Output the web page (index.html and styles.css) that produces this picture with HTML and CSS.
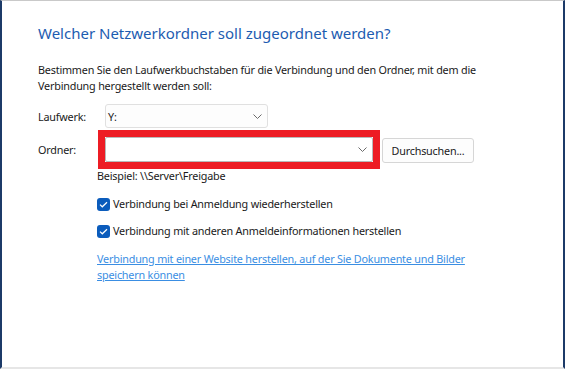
FILE: index.html
```html
<!DOCTYPE html>
<html lang="de">
<head>
<meta charset="utf-8">
<link rel="stylesheet" href="styles.css">
</head>
<body>
<div class="frame">
  <div class="content">
    <h1 class="title">Welcher Netzwerkordner soll zugeordnet werden?</h1>
    <p class="intro">Bestimmen Sie den Laufwerkbuchstaben für die Verbindung und den Ordner, mit dem die Verbindung hergestellt werden soll:</p>
    <div class="form">
      <div class="row row-drive">
        <span class="label">Laufwerk:</span>
        <div class="select select-drive">
          <span class="value">Y:</span>
          <svg class="chev" width="9" height="5" viewBox="0 0 9 5"><path d="M0.5 0.5 L4.5 4.5 L8.5 0.5" fill="none" stroke="#6b6b6b" stroke-width="1"/></svg>
        </div>
      </div>
      <div class="row row-folder">
        <span class="label">Ordner:</span>
        <div class="folder-wrap">
          <div class="select select-folder">
            <span class="value"></span>
            <svg class="chev" width="9" height="5" viewBox="0 0 9 5"><path d="M0.5 0.5 L4.5 4.5 L8.5 0.5" fill="none" stroke="#6b6b6b" stroke-width="1"/></svg>
          </div>
          <div class="highlight"></div>
        </div>
        <button class="btn">Durchsuchen...</button>
      </div>
    </div>
    <div class="options">
      <div class="example">Beispiel: \\Server\Freigabe</div>
      <label class="check"><span class="box"><svg width="9" height="7" viewBox="0 0 9 7"><path d="M1 3.6 L3.3 5.8 L8 1.2" fill="none" stroke="#fff" stroke-width="1.2"/></svg></span>Verbindung bei Anmeldung wiederherstellen</label>
      <label class="check"><span class="box"><svg width="9" height="7" viewBox="0 0 9 7"><path d="M1 3.6 L3.3 5.8 L8 1.2" fill="none" stroke="#fff" stroke-width="1.2"/></svg></span>Verbindung mit anderen Anmeldeinformationen herstellen</label>
      <a class="link" href="#">Verbindung mit einer Website herstellen, auf der Sie Dokumente und Bilder speichern können</a>
    </div>
  </div>
</div>
</body>
</html>
```
FILE: styles.css
```css
html, body {
  margin: 0;
  padding: 0;
  background: #ffffff;
}
.frame {
  box-sizing: border-box;
  width: 565px;
  height: 369px;
  border-left: 2px solid #1c3a68;
  border-right: 2px solid #1c3a68;
  border-top: 1px solid #c9c9c9;
  border-bottom: 2px solid #e6e6e6;
  background: #fff;
  font-family: "Noto Sans", "Open Sans", sans-serif;
  color: #1a1a1a;
  font-size: 10.8px;
  letter-spacing: -0.2px;
}
.content {
  padding: 21px 0 0 36px;
}
.title {
  margin: 0;
  font-weight: normal;
  font-size: 15px;
  letter-spacing: 0;
  line-height: 22px;
  color: #1d5cb1;
}
.intro {
  margin: 18px 0 0 0;
  width: 442px;
  line-height: 16px;
}
.form {
  margin-top: 10px;
  display: flex;
  flex-direction: column;
  gap: 8px;
}
.row {
  display: flex;
  align-items: center;
}
.label {
  width: 67px;
}
.select {
  box-sizing: border-box;
  display: flex;
  align-items: center;
  justify-content: space-between;
  border: 1px solid #e0e0e0;
  border-radius: 3px;
  background: #fdfdfd;
  padding: 0 5px 0 2px;
}
.select-drive {
  width: 163px;
  height: 24px;
}
.select-folder {
  width: 268px;
  height: 25px;
  border-color: #b9b9b9;
  border-radius: 2px;
  background: #fff;
}
.folder-wrap {
  position: relative;
}
.highlight {
  position: absolute;
  left: -7px;
  top: -7px;
  right: -7px;
  bottom: -7px;
  border: 7px solid #ed1c24;
}
.btn {
  box-sizing: border-box;
  margin: 2px 0 0 9px;
  width: 92px;
  height: 25px;
  border: 1px solid #d6d6d6;
  border-radius: 3px;
  background: #fdfdfd;
  font: inherit;
  letter-spacing: inherit;
  color: #1a1a1a;
  padding: 0;
}
.options {
  margin: 4px 0 0 59px;
  display: flex;
  flex-direction: column;
}
.example {
  line-height: 18px;
}
.check {
  display: flex;
  align-items: center;
  gap: 3px;
  margin-top: 9px;
  line-height: 20px;
}
.check + .check {
  margin-top: 7px;
}
.box {
  box-sizing: border-box;
  width: 13px;
  height: 13px;
  border-radius: 3px;
  background: #0b5cbc;
  display: flex;
  align-items: center;
  justify-content: center;
}
.link {
  margin-top: 10px;
  width: 372px;
  line-height: 16px;
  color: #3a8ee3;
  text-decoration: underline;
}
```
